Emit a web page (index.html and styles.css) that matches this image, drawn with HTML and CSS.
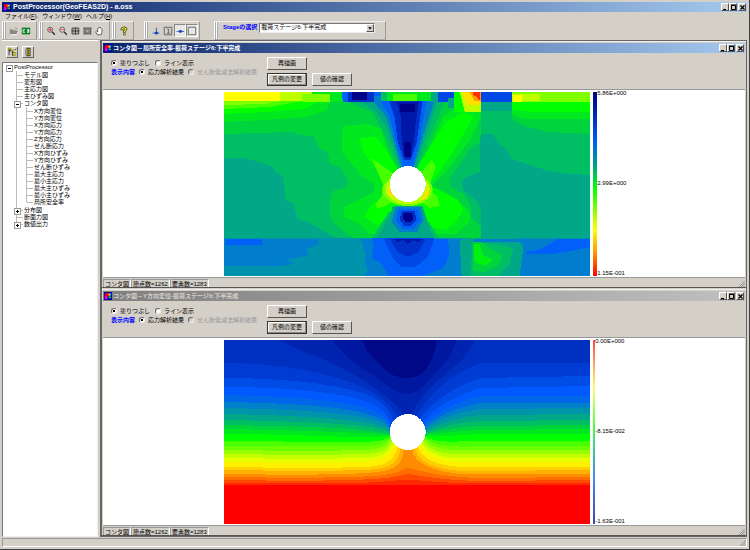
FILE: index.html
```html
<!DOCTYPE html>
<html lang="ja">
<head>
<meta charset="utf-8">
<title>PostProcessor(GeoFEAS2D) - a.oss</title>
<link rel="stylesheet" href="styles.css">
</head>
<body>
<svg class="defs" aria-hidden="true">
  <symbol id="app" viewBox="0 0 9 9"><path fill="#00a" d="M0 0h9v9H0z"/><path fill="#e02" d="M1 1h5v4H3v2H1z"/><path fill="#fe0" d="M5 2h2v2H5z"/><path fill="#0d2" d="M5 5h3v2H5z"/><path fill="#e0e" d="M1 5h3v3H1z"/><path fill="#0cf" d="M7 1h1v3H7z"/></symbol>
  <symbol id="min" viewBox="0 0 7 7"><path fill="#000" d="M1 5h3v1H1z"/></symbol>
  <symbol id="max" viewBox="0 0 7 7"><path fill="none" stroke="#000" d="M1.5 1.5h4v4h-4zM1 1h5"/></symbol>
  <symbol id="close" viewBox="0 0 7 7"><path stroke="#000" stroke-width="1.2" d="M1.5 1.5l4 4M5.500 1.500l-4 4"/></symbol>
  <symbol id="grip" viewBox="0 0 8 8"><path stroke="#888" d="M1 8l7-7M3.500 8L8 3.500M6 8l2-2"/></symbol>
</svg>
<header class="titlebar">
  <svg class="app-icon"><use href="#app"/></svg>
  <h1>PostProcessor(GeoFEAS2D) - a.oss</h1>
  <div class="win-buttons">
    <button aria-label="最小化"><svg><use href="#min"/></svg></button><button aria-label="最大化"><svg><use href="#max"/></svg></button><button class="apart" aria-label="閉じる"><svg><use href="#close"/></svg></button>
  </div>
</header>
<nav class="menu">
  <a href="#file">ファイル(<u>F</u>).</a><a href="#window">ウィンドウ(<u>W</u>)</a><a href="#help">ヘルプ(<u>H</u>)</a>
</nav>
<div class="toolbar">
  <div class="group">
    <button disabled aria-label="開く"><svg viewBox="0 0 12 12"><path fill="#8a8a84" d="M1 10V4h3l1 1h4v1h2l-2 4z"/><path fill="none" stroke="#fff" d="M2 10.500h7.500l2-4"/><path fill="none" stroke="#888" d="M7 3q2-2 3 1"/></svg></button>
    <button aria-label="切替"><svg viewBox="0 0 12 12"><path fill="#087828" d="M1 2h10v8H1z"/><path fill="#dff5dc" d="M2 4h3v4H2zM7 4h3v4H7z"/><path fill="#0a3" d="M3 5h2v2H3z"/><path fill="#042" d="M5 5.500h3v1H5z"/></svg></button>
  </div>
  <div class="group">
    <button aria-label="拡大"><svg viewBox="0 0 12 12"><circle cx="5" cy="4.500" r="3" fill="#eee" stroke="#444"/><path stroke="#222" stroke-width="1.600" d="M7.500 7l3 3.500"/><path stroke="#d00" d="M3 4.500h4M5 2.500v4"/></svg></button>
    <button aria-label="縮小"><svg viewBox="0 0 12 12"><circle cx="5" cy="4.500" r="3" fill="#eee" stroke="#444"/><path stroke="#222" stroke-width="1.600" d="M7.500 7l3 3.500"/><path stroke="#d00" d="M3 4.500h4"/></svg></button>
    <button aria-label="全体表示"><svg viewBox="0 0 12 12"><path fill="none" stroke="#222" d="M2.500 2.500h8v7h-8zM6.500 2v8M2 6h9"/><path fill="none" stroke="#555" d="M4.500 4v4M8.500 4v4"/></svg></button>
    <button aria-label="範囲表示"><svg viewBox="0 0 12 12"><path fill="none" stroke="#222" d="M2.500 2.500h8v7h-8z"/><path fill="none" stroke="#444" d="M4.500 4.500h4v3h-4zM2 2l2 2M11 2L9 4M2 10l2-2M11 10L9 8"/></svg></button>
    <button aria-label="移動"><svg viewBox="0 0 12 12"><path fill="#fff" stroke="#222" stroke-width=".8" d="M4 10.500L2 7l1-1 1.500 1V3l1-.5.500-1 1 .5 1 0 .500 1 1 1v3.500l-1 3z"/></svg></button>
  </div>
  <div class="group help">
    <button aria-label="ヘルプ"><svg viewBox="0 0 12 12"><path fill="none" stroke="#222" stroke-width="3" d="M3.500 5V3.500Q6 .8 8.500 3.500 8.500 5 6.500 6v2M6.500 9v2"/><path fill="none" stroke="#ee2" stroke-width="1.600" d="M3.500 4.500v-1Q6 1 8.500 3.500 8.500 5 6.500 6v1.500M6.500 9v1.500"/></svg></button>
  </div>
  <div class="group modes">
    <button aria-label="節点"><svg viewBox="0 0 12 12"><path stroke="#124a9c" d="M6.500 2v7M2 8.500h8"/><path fill="#03c" d="M5 7h3v3H5z"/></svg></button>
    <button aria-label="要素番号"><svg viewBox="0 0 12 12"><path fill="none" stroke="#555" d="M1.500 1.500h9v9h-9zM5 3.500h1.500v5M4.500 8.500h4"/></svg></button>
    <button class="pressed" aria-pressed="true" aria-label="線"><svg viewBox="0 0 12 12"><path stroke="#124a9c" d="M2 6.500h9"/><path fill="#03c" d="M5 5h3v3H5z"/></svg></button>
    <button class="pressed" aria-pressed="true" aria-label="枠"><svg viewBox="0 0 12 12"><path fill="#e8e6e0" stroke="#555" d="M1.500 1.500h9v9h-9z"/></svg></button>
  </div>
  <div class="group stage">
    <label for="stage">Stageの選択</label>
    <span class="combo"><select id="stage"><option>載荷ステージ6:下半完成</option></select><svg viewBox="0 0 8 8"><path fill="#000" d="M1.500 3h5L4 6z"/></svg></span>
  </div>
</div>
<div class="work">
  <aside class="side">
    <div class="side-tools">
      <button aria-label="すべて展開"><svg viewBox="0 0 12 12"><path fill="none" stroke="#222" d="M2.500 1v9M2 4.500h4M6.500 4v6M2 2.500h3"/><path fill="#aa0" d="M1 1h3v2H1zM5 3h3v2H5zM8 6h3v2H8zM8 9h3v2H8z"/><path stroke="#222" d="M6 6.500h2M6 9.500h2M9 4l2-2"/></svg></button>
      <button aria-label="すべて折りたたむ"><svg viewBox="0 0 12 12"><path fill="none" stroke="#222" d="M6.500 1v10M4 1.500h5M4 10.500h5"/><path fill="#cc0" stroke="#222" stroke-width=".6" d="M5 2h4v2H5zM5 5h4v2H5zM5 8h4v2H5z"/><path stroke="#555" d="M3.500 2v8"/></svg></button>
    </div>
    <div class="tree">
      <ul>
        <li class="open">PostProcessor
          <ul>
            <li>モデル図</li><li>変形図</li><li>主応力図</li><li>主ひずみ図</li>
            <li class="open">コンタ図
              <ul>
                <li>X方向変位</li><li>Y方向変位</li><li>X方向応力</li><li>Y方向応力</li><li>Z方向応力</li><li>せん断応力</li><li>X方向ひずみ</li><li>Y方向ひずみ</li><li>せん断ひずみ</li><li>最大主応力</li><li>最小主応力</li><li>最大主ひずみ</li><li>最小主ひずみ</li><li>局所安全率</li>
              </ul>
            </li>
            <li class="shut">分布図</li><li>断面力図</li><li class="shut">数値出力</li>
          </ul>
        </li>
      </ul>
    </div>
  </aside>
  <main class="mdi">
    <section class="child">
      <header class="titlebar">
        <svg class="app-icon"><use href="#app"/></svg>
        <h2>コンタ図－局所安全率-載荷ステージ6:下半完成</h2>
        <div class="win-buttons">
          <button aria-label="最小化"><svg><use href="#min"/></svg></button><button aria-label="最大化"><svg><use href="#max"/></svg></button><button class="apart" aria-label="閉じる"><svg><use href="#close"/></svg></button>
        </div>
      </header>
      <form class="panel">
        <div class="options">
          <div class="row"><label><input type="radio" name="fill1" checked>塗りつぶし</label><label><input type="radio" name="fill1">ライン表示</label></div>
          <div class="row tight"><b>表示内容</b><label><input type="radio" name="kind1" checked>応力解析結果</label><label class="off"><input type="radio" name="kind1" disabled>せん断低減法解析結果</label></div>
        </div>
        <div class="actions"><button type="button">再描画</button><button type="button" class="default">凡例の変更</button><button type="button">値の確認</button></div>
      </form>
      <div class="canvas">
        <svg class="plot" viewBox="0 0 367 184" preserveAspectRatio="none" shape-rendering="crispEdges" role="img" aria-label="局所安全率">
          <path fill="#00d43c" d="M0 0h367v184H0z"/>
          <path fill="#00be64" d="M0 42L68 40 76 43 89 44 96 57 104 60 106 72 116 75 124 89 123 95 109 99 106 109 106 125 111 132 121 140 130 147H0z"/>
          <path fill="#00a888" d="M0 66H21L35 70 48 74 51 80 59 84 62 109 69 110 74 127 84 130 93 135 113 147H0z"/>
          <path fill="#00e81e" d="M0 30L40 28 83 25 103 18 107 8H0z"/>
          <path fill="#0f0" d="M0 22L40 20 80 17 97 8H0z"/>
          <path fill="#48ff00" d="M0 17L46 15 79 9H0z"/>
          <path fill="#80ff00" d="M0 13L40 12 62 8H0z"/>
          <!-- right-hand ground -->
          <path fill="#00be64" d="M257 8V50L248 55 236 72 226 86 226 94 240 102 247 114 247 125 257 134V147H367V8z"/>
          <path fill="#00a888" d="M257 42H269L276 52 284 59 288 67 309 74 326 79 345 82 367 83V147H257V114L250 106 240 98 238 90 241 86 256 80z"/>
          <path fill="#00a888" d="M257 10h31v9h-31z"/>
          <path fill="#00d43c" d="M288 8V27L300 34 326 40 367 42V8z"/>
          <path fill="#00e81e" d="M288 8V22L300 27H367V8z"/>
          <path fill="#0f0" d="M288 8V18L310 20H367V8z"/>
          <!-- wings -->
          <path fill="#00e81e" d="M119 34L143 32 157 36 168 70 184 92 203 60 220 24 240 12H257V26L248 45 236 62 222 80 208 94 222 100 236 110 246 120 246 130 232 142H145L136 132 120 125V115L135 108 150 100 150 92 138 84 128 72 118 60z"/>
          <path fill="#0f0" d="M136 46L153 45 165 62 178 84 198 68 212 46 222 30 240 20 250 25 238 45 228 62 214 82 206 92 218 100 234 108 240 118 232 130 222 138 206 135 184 106 166 125 154 133 140 125 148 113 160 103 163 88 150 74 140 62z"/>
          <path fill="#48ff00" d="M148 66L156 72 168 80 184 92 198 80 208 68 212 74 208 86 206 97 214 105 216 114 206 116 184 98 162 114 154 116 152 112 158 104 159 92z"/>
          <path fill="#00be64" d="M148 147L165 120 174 118 196 118 207 133 216 147z"/>
          <path fill="#00a888" d="M153 147L168 120H198L211 147z"/>
          <!-- pressure bulb above the opening -->
          <path fill="#00be64" d="M121 8L148 20 162 45 177 80 184 84 194 76 205 48 222 8z"/>
          <path fill="#00a888" d="M135 8L153 20 163 36 177 76H192L202 44 214 8z"/>
          <path fill="#007dcd" d="M148 8L162 24 168 42 178 76H190L201 38 211 8z"/>
          <path fill="#0060f8" d="M156 8L166 24 172 50 180 75H189L197 43 203 8z"/>
          <path fill="#0030c8" d="M165 8L171 26 174 50 180 68H187L193 50 199 8z"/>
          <path fill="#0018a8" d="M173 10L177 24 178 50 181 66H186L190 50 192 30 195 10z"/>
          <path fill="#000088" d="M176 12h15v8h-15zM180 50h7v15h-5l-2-4z"/>
          <!-- surface layer -->
          <path fill="#ff0" d="M0 0h56v9H0z"/><path fill="#beff00" d="M56 0h32v9H56z"/><path fill="#80ff00" d="M78 2h28v8H78z"/><path fill="#00e81e" d="M88 0h30v2H88zM106 0h12v10h-12z"/>
          <path fill="#0060f8" d="M118 0h40v10h-39z"/><path fill="#0030c8" d="M124 0h26v10h-26z"/><path fill="#000088" d="M128 0h15v8h-15z"/><path fill="#007dcd" d="M150 4h7v7h-7z"/><path fill="#00be64" d="M157 0h12v9h-12z"/><path fill="#00e81e" d="M163 0h46v9h-46z"/><path fill="#48ff00" d="M169 2h24v7h-24z"/><path fill="#00a888" d="M207 0h7v10h-7z"/><path fill="#0048e6" d="M214 0h16v10h-16z"/><path fill="#00a888" d="M224 6h7v10h-7z"/>
          <path fill="#0f0" d="M230 0h10v20h-10z"/><path fill="#beff00" d="M236 0h21v20h-16z"/><path fill="#ffe000" d="M239 0h18v13h-14z"/><path fill="#ff9c00" d="M246 0h11v9h-6z"/><path fill="#ff3000" d="M249 0h7v8l-7-6z"/>
          <path fill="#0048e6" d="M257 0h31v10h-31z"/><path fill="#80ff00" d="M288 0h79v10h-79z"/><path fill="#beff00" d="M288 2h28v7h-28z"/><path fill="#ff0" d="M289 3h9v7h-9z"/>
          <!-- lower layer -->
          <path fill="#0094ac" d="M0 146h367v38H0z"/>
          <path fill="#007dcd" d="M0 147H94V153L84 156 82 160 87 163 62 168 71 172 57 174H0zM137 147L142 163 141 171 144 178 140 184H244L240 147zM262 162L285 147H367V184H292L277 177z"/>
          <path fill="#0060f8" d="M2 147H38V153H2zM148 146L150 155 148 166 158 172 165 184H198L220 176 226 162 224 147zM302 160L318 157 334 147H367V155L342 160 330 162H304z"/>
          <path fill="#0048e6" d="M160 146L163 154 170 167 178 175H192L204 165 211 146z"/>
          <path fill="#0030c8" d="M166 147L174 160 184 165 195 160 202 147z"/>
          <path fill="#0018a8" d="M170 147H199L194 150 189 148 184 152 179 148 174 150z"/>
          <path fill="#00a888" d="M236 148L246 146H293L300 154 296 184H238z"/>
          <path fill="#00be64" d="M249 150L272 152 290 156 286 172 274 184H247z"/>
          <path fill="#00d43c" d="M249 150H258L266 156 279 163 275 174 260 180 249 178z"/>
          <path fill="#00f010" d="M250 152H256L260 163 269 168 262 174 251 170z"/>
          <path fill="#007dcd" d="M250 147h48v3h-48z"/>
          <!-- bulb below the opening -->
          <path fill="#00a888" d="M169 114H199L204 130 195 143H172L165 130z"/>
          <path fill="#007dcd" d="M172 115H197L200 128 193 140H176L168 130z"/>
          <path fill="#0060f8" d="M175 117H194L197 128 190 137H179L172 128z"/>
          <path fill="#0030c8" d="M178 119H191L193 128 187 134H181L176 128z"/>
          <path fill="#000088" d="M180 121h8l2 5-3 4h-5l-3-4z"/>
          <!-- opening -->
          <ellipse cx="184" cy="98" rx="25" ry="16" fill="#80ff00"/><ellipse cx="184" cy="97" rx="22" ry="15" fill="#beff00"/><path fill="#ffe000" d="M163 94l4 4 3 10-5-5zM205 94v8l-3 5-4 1z"/>
          <circle cx="184" cy="92" r="18" fill="#fff"/>
        </svg>
        <div class="legend">
          <svg viewBox="0 0 4 184" preserveAspectRatio="none"><defs><linearGradient id="s1" x2="0" y2="1"><stop offset="0" stop-color="#008"/><stop offset=".08" stop-color="#0018a0"/><stop offset=".26" stop-color="#0058ff"/><stop offset=".4" stop-color="#00a090"/><stop offset=".52" stop-color="#0f0"/><stop offset=".75" stop-color="#ff0"/><stop offset=".87" stop-color="#f90"/><stop offset="1" stop-color="#f00"/></linearGradient></defs><path fill="url(#s1)" d="M0 0h4v184H0z"/></svg>
          <div class="ticks"><span>5.86E+000</span><span>2.99E+000</span><span>1.15E-001</span></div>
        </div>
      </div>
      <footer class="status"><span>コンタ図</span><span>節点数=1262</span><span>要素数=1283</span><svg class="grip"><use href="#grip"/></svg></footer>
    </section>
    <section class="child inactive">
      <header class="titlebar">
        <svg class="app-icon"><use href="#app"/></svg>
        <h2>コンタ図－Y方向変位-載荷ステージ6:下半完成</h2>
        <div class="win-buttons">
          <button aria-label="最小化"><svg><use href="#min"/></svg></button><button aria-label="最大化"><svg><use href="#max"/></svg></button><button class="apart" aria-label="閉じる"><svg><use href="#close"/></svg></button>
        </div>
      </header>
      <form class="panel">
        <div class="options">
          <div class="row"><label><input type="radio" name="fill2" checked>塗りつぶし</label><label><input type="radio" name="fill2">ライン表示</label></div>
          <div class="row tight"><b>表示内容</b><label><input type="radio" name="kind2" checked>応力解析結果</label><label class="off"><input type="radio" name="kind2" disabled>せん断低減法解析結果</label></div>
        </div>
        <div class="actions"><button type="button">再描画</button><button type="button" class="default">凡例の変更</button><button type="button">値の確認</button></div>
      </form>
      <div class="canvas">
        <svg class="plot" viewBox="0 0 367 184" preserveAspectRatio="none" shape-rendering="crispEdges" role="img" aria-label="Y方向変位">
          <path fill="#0030c0" d="M0 0h367v184H0z"/>
          <path fill="#0024b0" d="M55 0C75 12 100 18 118 28S165 54 180 75H188C196 54 215 40 229 28S246 10 252 0z"/>
          <path fill="#0018a0" d="M109 0C116 14 136 26 150 36S172 54 184 54 205 40 215 30 230 10 233 0z"/>
          <path fill="#000888" d="M139 0C141 12 152 20 160 28S174 38 184 38 202 32 206 24 212 10 213 0z"/>
          <path fill="#003cd4" d="M0 23C50 23 90 30 120 40S160 58 174 76L193 76C204 56 226 34 257 23H367V184H0z"/>
          <path fill="#004ce6" d="M0 38C60 38 105 44 132 51S164 68 170 80L196 79C208 62 232 46 257 38L367 36V184H0z"/>
          <path fill="#0058ff" d="M0 47C60 47 108 52 134 59S163 74 168 84L199 82C210 68 234 54 257 48L367 46V184H0z"/>
          <path fill="#0068e8" d="M0 55C60 56 108 60 134 66S163 78 167 87L201 84C212 72 236 61 257 56H367V184H0z"/>
          <path fill="#0080c8" d="M0 62C60 63 110 66 136 72S163 83 166 88L201 87C212 76 236 67 257 63H367V184H0z"/>
          <path fill="#0094aa" d="M0 68C60 69 112 72 138 77S163 86 166 90L202 89C212 79 236 72 257 69L367 68V184H0z"/>
          <path fill="#00a888" d="M0 74C60 75 112 78 138 82S163 89 166 91L202 91C214 83 236 77 257 75L367 74V184H0z"/>
          <path fill="#00be64" d="M0 80C60 81 112 83 138 86S163 91 166 93L202 93C214 87 236 82 257 81L367 80V184H0z"/>
          <path fill="#00d43c" d="M0 85C60 86 112 87 138 90S160 93 166 94L202 94C214 90 236 87 257 86L367 85V184H0z"/>
          <path fill="#00e81e" d="M0 89C60 90 112 92 138 93S160 95 166 95L202 95C214 93 236 91 257 90L367 89V184H0z"/>
          <path fill="#0f0" d="M0 94C60 94 112 97 138 97S160 96 166 96L202 96C214 97 236 95 257 94H367V184H0z"/>
          <path fill="#48ff00" d="M0 101C60 101 112 103 138 102S160 99 166 97L202 97C214 104 236 101 257 101H367V184H0z"/>
          <path fill="#6cff00" d="M0 106C60 106 112 107 138 106S160 102 167 98L201 98C212 108 236 107 257 106H367V184H0z"/>
          <path fill="#94ff00" d="M0 110C60 111 112 111 138 110S160 105 168 99L200 99C210 112 236 111 257 110H367V184H0z"/>
          <path fill="#c4ff00" d="M0 114C60 115 112 115 138 114S161 109 169 101L199 101C208 116 236 115 257 114H367V184H0z"/>
          <path fill="#e8ff00" d="M0 118C60 119 112 119 138 118S163 112 170 103L198 103C206 119 234 119 257 118H367V184H0z"/>
          <path fill="#fff000" d="M0 122C60 123 112 123 138 122S166 114 172 104L196 104C204 122 234 123 257 122H367V184H0z"/>
          <path fill="#ffd000" d="M0 127C60 128 112 128 140 127S170 118 174 107L194 107C200 126 234 128 257 127H367V184H0z"/>
          <path fill="#ffb000" d="M0 130C60 131 112 131 142 130S174 120 177 108L191 108C196 130 234 132 257 131L367 130V184H0z"/>
          <path fill="#ff8c00" d="M0 134C60 135 112 135 144 133S179 122 180 109L188 109C190 130 234 136 257 134H367V184H0z"/>
          <path fill="#ff6c00" d="M0 137C60 138 120 138 150 136S178 128 184 128 210 137 257 138L367 137V184H0z"/>
          <path fill="#ff4800" d="M0 140C60 141 120 141 150 139S178 134 184 134 210 140 257 141L367 140V184H0z"/>
          <path fill="#ff2800" d="M0 143H130C150 143 170 140 184 140S220 143 240 143H367V184H0z"/>
          <path fill="#f00" d="M0 145H367V184H0z"/>
          <circle cx="184" cy="92" r="18" fill="#fff"/>
        </svg>
        <div class="legend thin">
          <svg viewBox="0 0 4 184" preserveAspectRatio="none"><defs><linearGradient id="s2" x2="0" y2="1"><stop offset="0" stop-color="#f44"/><stop offset=".12" stop-color="#f96"/><stop offset=".26" stop-color="#ff6"/><stop offset=".48" stop-color="#4f4"/><stop offset=".62" stop-color="#4ba"/><stop offset=".75" stop-color="#48f"/><stop offset="1" stop-color="#44a"/></linearGradient></defs><path fill="url(#s2)" d="M0 0h4v184H0z"/></svg>
          <div class="ticks"><span>0.00E+000</span><span>-8.15E-002</span><span>-1.63E-001</span></div>
        </div>
      </div>
      <footer class="status"><span>コンタ図</span><span>節点数=1262</span><span>要素数=1283</span><svg class="grip"><use href="#grip"/></svg></footer>
    </section>
  </main>
</div>
<footer class="main-status"><svg class="grip"><use href="#grip"/></svg></footer>
</body>
</html>
```
FILE: styles.css
```css
:root {
  --face: #d4d0c8;
  --shade: #808080;
  --dark: #404040;
}
* { box-sizing: border-box; }
body {
  margin: 0;
  height: 100vh;
  padding: 2px;
  display: flex;
  flex-direction: column;
  overflow: hidden;
  background: var(--face);
  border-right: 1px solid var(--dark);
  border-bottom: 1px solid var(--dark);
  color: #000;
  font: 6px/7px "Liberation Sans", "Noto Sans CJK JP", sans-serif;
}
button, select, input { font: inherit; color: inherit; margin: 0; padding: 0; }
button { background: none; border: 0; display: flex; align-items: center; justify-content: center; }
svg { display: block; flex: none; }
.defs { position: absolute; width: 0; height: 0; }

.titlebar {
  height: 10px;
  flex: none;
  display: flex;
  align-items: center;
  gap: 2px;
  padding: 0 1px;
  color: #fff;
  background: linear-gradient(90deg, #0a246a, #a6caf0);
}
.titlebar h1, .titlebar h2 { margin: 0; flex: 1; font-size: 6px; line-height: 10px; font-weight: 700; white-space: nowrap; }
.titlebar h1 { font-size: 7px; }
.app-icon { width: 8px; height: 8px; }
.win-buttons { display: flex; }
.win-buttons button { width: 8px; height: 8px; background: var(--face); border: 1px solid; border-color: #fff #555 #555 #fff; }
.win-buttons .apart { margin-left: 1px; }
.win-buttons svg { width: 7px; height: 7px; }

.menu { height: 9px; flex: none; display: flex; align-items: center; gap: 4px; padding-left: 3px; }
.menu a { color: inherit; text-decoration: none; }

.toolbar { height: 19px; flex: none; display: flex; gap: 2px; }
.group {
  display: flex;
  align-items: center;
  padding: 0 4px 0 6px;
  border-right: 1px solid #999;
  border-top: 1px solid #eee;
  border-bottom: 1px solid #aaa;
  background: linear-gradient(90deg, #fff 1px, #aaa 1px 2px, #fff 2px 3px, #aaa 3px 4px, transparent 4px);
}
.group button { width: 12px; height: 13px; }
.group svg { width: 10px; height: 10px; }
.group.help { padding-right: 3px; }
.group.modes { margin-left: 8px; padding-right: 1px; }
.modes .pressed { background: #eae8e4; border: 1px solid; border-color: #888 #fff #fff #888; }
.group.stage { gap: 2px; margin-left: 12px; padding: 0 10px 6px 9px; }
.stage label, .tight b { color: #00f; font-weight: 700; }
.combo { display: flex; align-items: center; background: #fff; border: 1px solid; border-color: #777 #eee #eee #777; }
.combo select { width: 106px; height: 8px; appearance: none; border: 0; background: none; padding-left: 1px; outline: 0; }
.combo svg { width: 8px; height: 8px; background: var(--face); border: 1px solid; border-color: #fff #555 #555 #fff; }

.work { flex: 1; min-height: 0; display: flex; gap: 2px; }
.side { flex: 0 0 96px; display: flex; flex-direction: column; }
.side-tools { height: 22px; flex: none; display: flex; align-items: center; gap: 4px; padding-left: 4px; border-top: 1px solid #fff; }
.side-tools button { width: 12px; height: 12px; border: 1px solid; border-color: #fff #666 #666 #fff; }
.side-tools svg { width: 10px; height: 10px; }
.tree { flex: 1; background: #fff; border: 1px solid; border-color: #777 #eee #eee #777; padding: 1px 0 0 3px; }
.tree ul { list-style: none; margin: 0; padding: 1px 0 1px 10px; background: linear-gradient(#bbb, #bbb) 2px 0 / 1px calc(100% - 5px) no-repeat; }
.tree > ul { padding: 0; background: none; }
.tree li { position: relative; white-space: nowrap; }
.tree > ul > li { padding-left: 8px; }
.tree li li::before { content: ""; position: absolute; left: -7px; top: 3px; width: 6px; height: 1px; background: #bbb; }
.tree .open::after, .tree .shut::after {
  content: ""; position: absolute; left: -10px; top: 1px; width: 5px; height: 5px; border: 1px solid #999;
  background: linear-gradient(#000, #000) center / 3px 1px no-repeat, #fff;
}
.tree .shut::after { background: linear-gradient(#000, #000) center / 3px 1px no-repeat, linear-gradient(#000, #000) center / 1px 3px no-repeat, #fff; }
.tree > ul > .open::after { left: 0; }

.mdi { flex: 1; min-width: 0; display: flex; flex-direction: column; gap: 1px; border: solid; border-width: 1px 1px 1px 2px; border-color: #666; }
.child { flex: 1; min-height: 0; display: flex; flex-direction: column; padding: 1px 1px 0; border-bottom: 1px solid #555; border-top: 1px solid #eee; }
.child .titlebar { gap: 1px; }
.inactive .titlebar { background: linear-gradient(90deg, #808080, #c0c0c0); }
.inactive h2 { color: var(--face); }
.panel { height: 37px; flex: none; display: flex; padding: 4px 0 0 8px; border-bottom: 1px solid #999; }
.options { flex: 0 0 156px; padding-top: 2px; display: flex; flex-direction: column; gap: 1px; }
.row { display: flex; gap: 5px; height: 8px; align-items: center; white-space: nowrap; }
.row.tight { gap: 4px; }
.row label { display: flex; align-items: center; gap: 3px; }
.off { color: #999; }
input[type="radio"] { appearance: none; width: 6px; height: 6px; border-radius: 50%; border: 1px solid; border-color: #666 #eee #eee #666; background: #fff; }
input[type="radio"]:checked { background: linear-gradient(#000, #000) center / 2px 2px no-repeat, #fff; }
input[type="radio"]:disabled { background: var(--face); }
.actions { display: grid; grid-template-columns: 40px 40px; grid-auto-rows: 13px; gap: 3px 5px; }
.actions button { border: 1px solid; border-color: #fff #555 #555 #fff; }
.actions .default { grid-column: 1; border-color: #333; box-shadow: inset -1px -1px #888, inset 1px 1px #fff; }

.canvas { flex: 1; min-height: 0; display: grid; grid-template: 100% / 121fr 367fr 155fr; background: #fff; padding: 2px 0 1px; overflow: hidden; }
.plot { grid-column: 2; width: 100%; height: 100%; }
.legend { display: flex; height: 100%; padding-left: 3px; }
.legend > svg { width: 4px; height: 100%; }
.thin > svg { width: 2px; }
.ticks { display: flex; flex-direction: column; justify-content: space-between; margin: -2px 0 -1px; }

.status { height: 10px; flex: none; display: flex; align-items: center; border-top: 1px solid #999; }
.status span { height: 8px; line-height: 8px; padding: 0 1px; border: solid; border-width: 1px 1px 0 1px; border-color: #999 #fff #fff #999; white-space: nowrap; }
.grip { width: 7px; height: 7px; margin-left: auto; align-self: flex-end; }
.main-status { height: 9px; flex: none; display: flex; margin-top: 1px; border: 1px solid; border-color: #999 #fff #fff #999; }
```
